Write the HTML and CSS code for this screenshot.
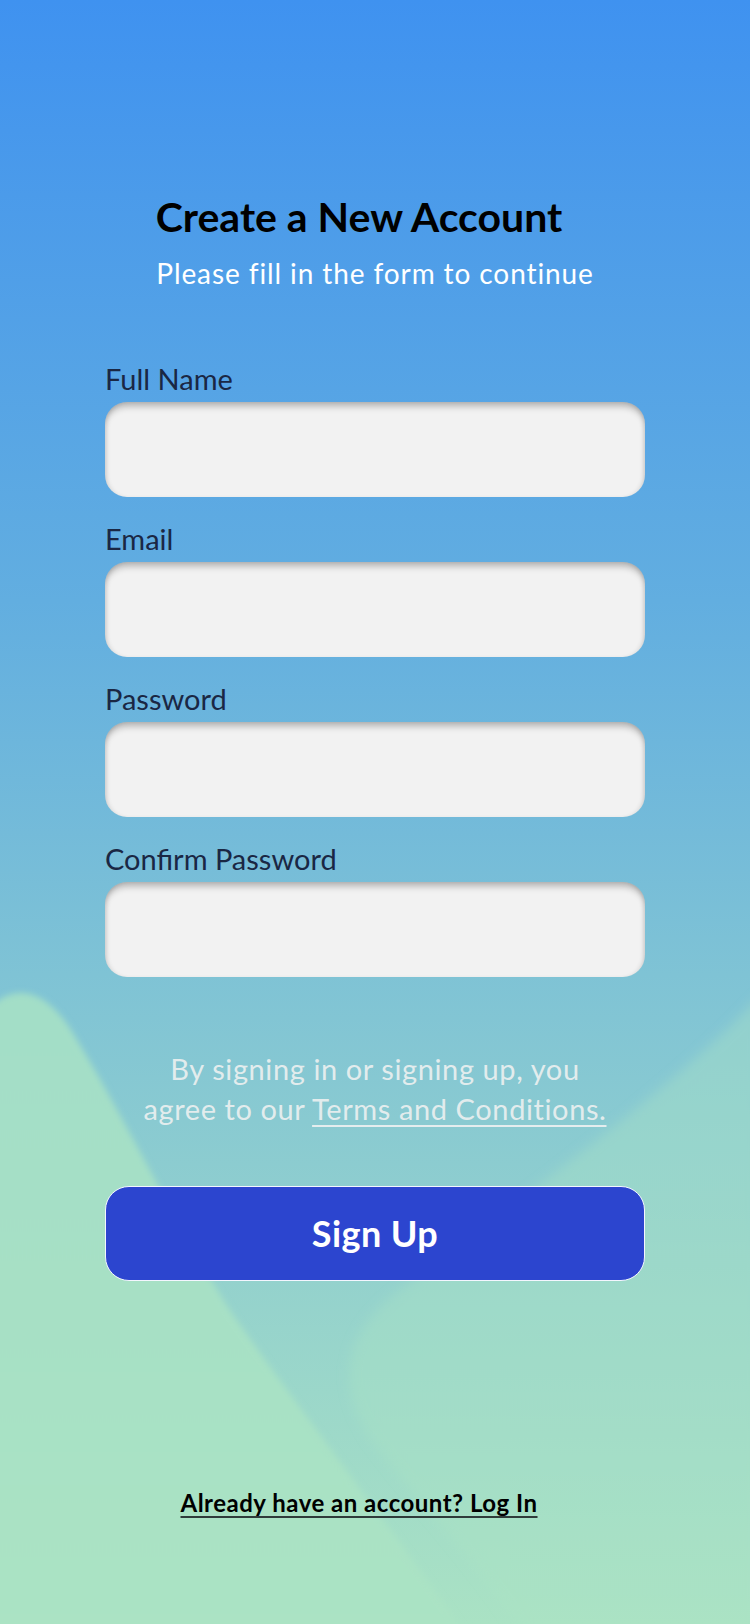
FILE: index.html
```html
<!DOCTYPE html>
<html lang="en">
<head>
<meta charset="utf-8">
<title>Create a New Account</title>
<link rel="stylesheet" href="styles.css">
</head>
<body>
<div class="screen">
  <svg class="backdrop" viewBox="0 0 750 1624" preserveAspectRatio="none" aria-hidden="true">
    <defs>
      <linearGradient id="blobL" x1="0" y1="0" x2="0" y2="1">
        <stop offset="0" stop-color="#a3dec7"/>
        <stop offset="1" stop-color="#abe3c4"/>
      </linearGradient>
      <linearGradient id="blobR" x1="0" y1="0" x2="0" y2="1">
        <stop offset="0" stop-color="#a6dfc7"/>
        <stop offset="1" stop-color="#abe3c4"/>
      </linearGradient>
      <filter id="soft" x="-10%" y="-10%" width="120%" height="120%">
        <feGaussianBlur stdDeviation="3"/>
      </filter>
      <filter id="softer" x="-10%" y="-10%" width="120%" height="120%">
        <feGaussianBlur stdDeviation="6"/>
      </filter>
    </defs>
    <path filter="url(#softer)" fill="url(#blobR)" fill-opacity="0.45" d="M760 995 C 690 1075, 520 1200, 400 1290 C 340 1335, 335 1390, 375 1445 C 420 1505, 480 1565, 525 1640 L 760 1640 Z"/>
    <path filter="url(#soft)" fill="url(#blobL)" d="M-10 1008 C 10 986, 45 982, 77 1040 C 120 1110, 190 1250, 233 1315 C 300 1410, 400 1540, 470 1640 L -10 1640 Z"/>
  </svg>

  <main class="content">
    <h1 class="title">Create a New Account</h1>
    <p class="subtitle">Please fill in the form to continue</p>

    <form class="form">
      <label class="field">
        <span class="field-label">Full Name</span>
        <span class="field-input"></span>
      </label>
      <label class="field">
        <span class="field-label">Email</span>
        <span class="field-input"></span>
      </label>
      <label class="field">
        <span class="field-label">Password</span>
        <span class="field-input"></span>
      </label>
      <label class="field">
        <span class="field-label">Confirm Password</span>
        <span class="field-input"></span>
      </label>
    </form>

    <p class="terms">By signing in or signing up, you<br>agree to our <span class="terms-link">Terms and Conditions.</span></p>

    <button class="signup" type="button">Sign Up</button>

    <p class="login">Already have an account? Log In</p>
  </main>
</div>
</body>
</html>
```

FILE: styles.css
```css
* { box-sizing: border-box; }

html, body {
  margin: 0;
  padding: 0;
}

body {
  width: 750px;
  height: 1624px;
  overflow: hidden;
  font-family: "Lato", "Open Sans", sans-serif;
}

.screen {
  position: relative;
  width: 750px;
  height: 1624px;
  overflow: hidden;
  background: linear-gradient(180deg, #3f92f0 0%, #4b9bea 12%, #62aee0 37%, #7fc3d5 60%, #93d1cd 78%, #aae2c4 100%);
}

.backdrop {
  position: absolute;
  left: 0;
  top: 0;
  width: 750px;
  height: 1624px;
}

.content {
  position: relative;
  display: flex;
  flex-direction: column;
  align-items: center;
  padding-top: 193px;
}

.title {
  margin: 0;
  padding-right: 32px;
  font-size: 41px;
  line-height: 48px;
  font-weight: 700;
  color: #000;
}

.subtitle {
  margin: 14px 0 0;
  font-size: 28px;
  line-height: 36px;
  letter-spacing: 0.9px;
  color: #fff;
}

.form {
  width: 540px;
  margin-top: 70px;
  display: flex;
  flex-direction: column;
  gap: 24px;
}

.field {
  display: flex;
  flex-direction: column;
  gap: 5px;
}

.field-label {
  font-size: 29px;
  line-height: 36px;
  color: #1a2744;
}

.field-input {
  display: block;
  height: 95px;
  border-radius: 22px;
  background: #f2f2f2;
  box-shadow:
    inset 0 7px 7px -3px rgba(0, 0, 0, 0.28),
    inset 4px 0 5px -3px rgba(0, 0, 0, 0.14),
    inset -4px 0 5px -3px rgba(0, 0, 0, 0.14);
}

.terms {
  margin: 72px 0 0;
  font-size: 29px;
  line-height: 40px;
  letter-spacing: 0.6px;
  text-align: center;
  color: rgba(236, 240, 240, 0.92);
}

.terms-link {
  text-decoration: underline;
  text-decoration-thickness: 2px;
  text-underline-offset: 5px;
}

.signup {
  margin-top: 57px;
  width: 540px;
  height: 95px;
  border: 1.5px solid #f4f6ff;
  border-radius: 24px;
  background: #2c45cf;
  color: #fff;
  font-family: inherit;
  font-size: 36px;
  font-weight: 700;
  letter-spacing: 0.4px;
  padding: 0 0 2px;
}

.login {
  margin: 207px 0 0;
  padding-right: 32px;
  font-size: 24px;
  line-height: 30px;
  font-weight: 700;
  letter-spacing: 0.5px;
  color: #000;
  text-decoration: underline;
  text-decoration-color: #2f3b3a;
  text-decoration-thickness: 2px;
  text-underline-offset: 4px;
}
```
